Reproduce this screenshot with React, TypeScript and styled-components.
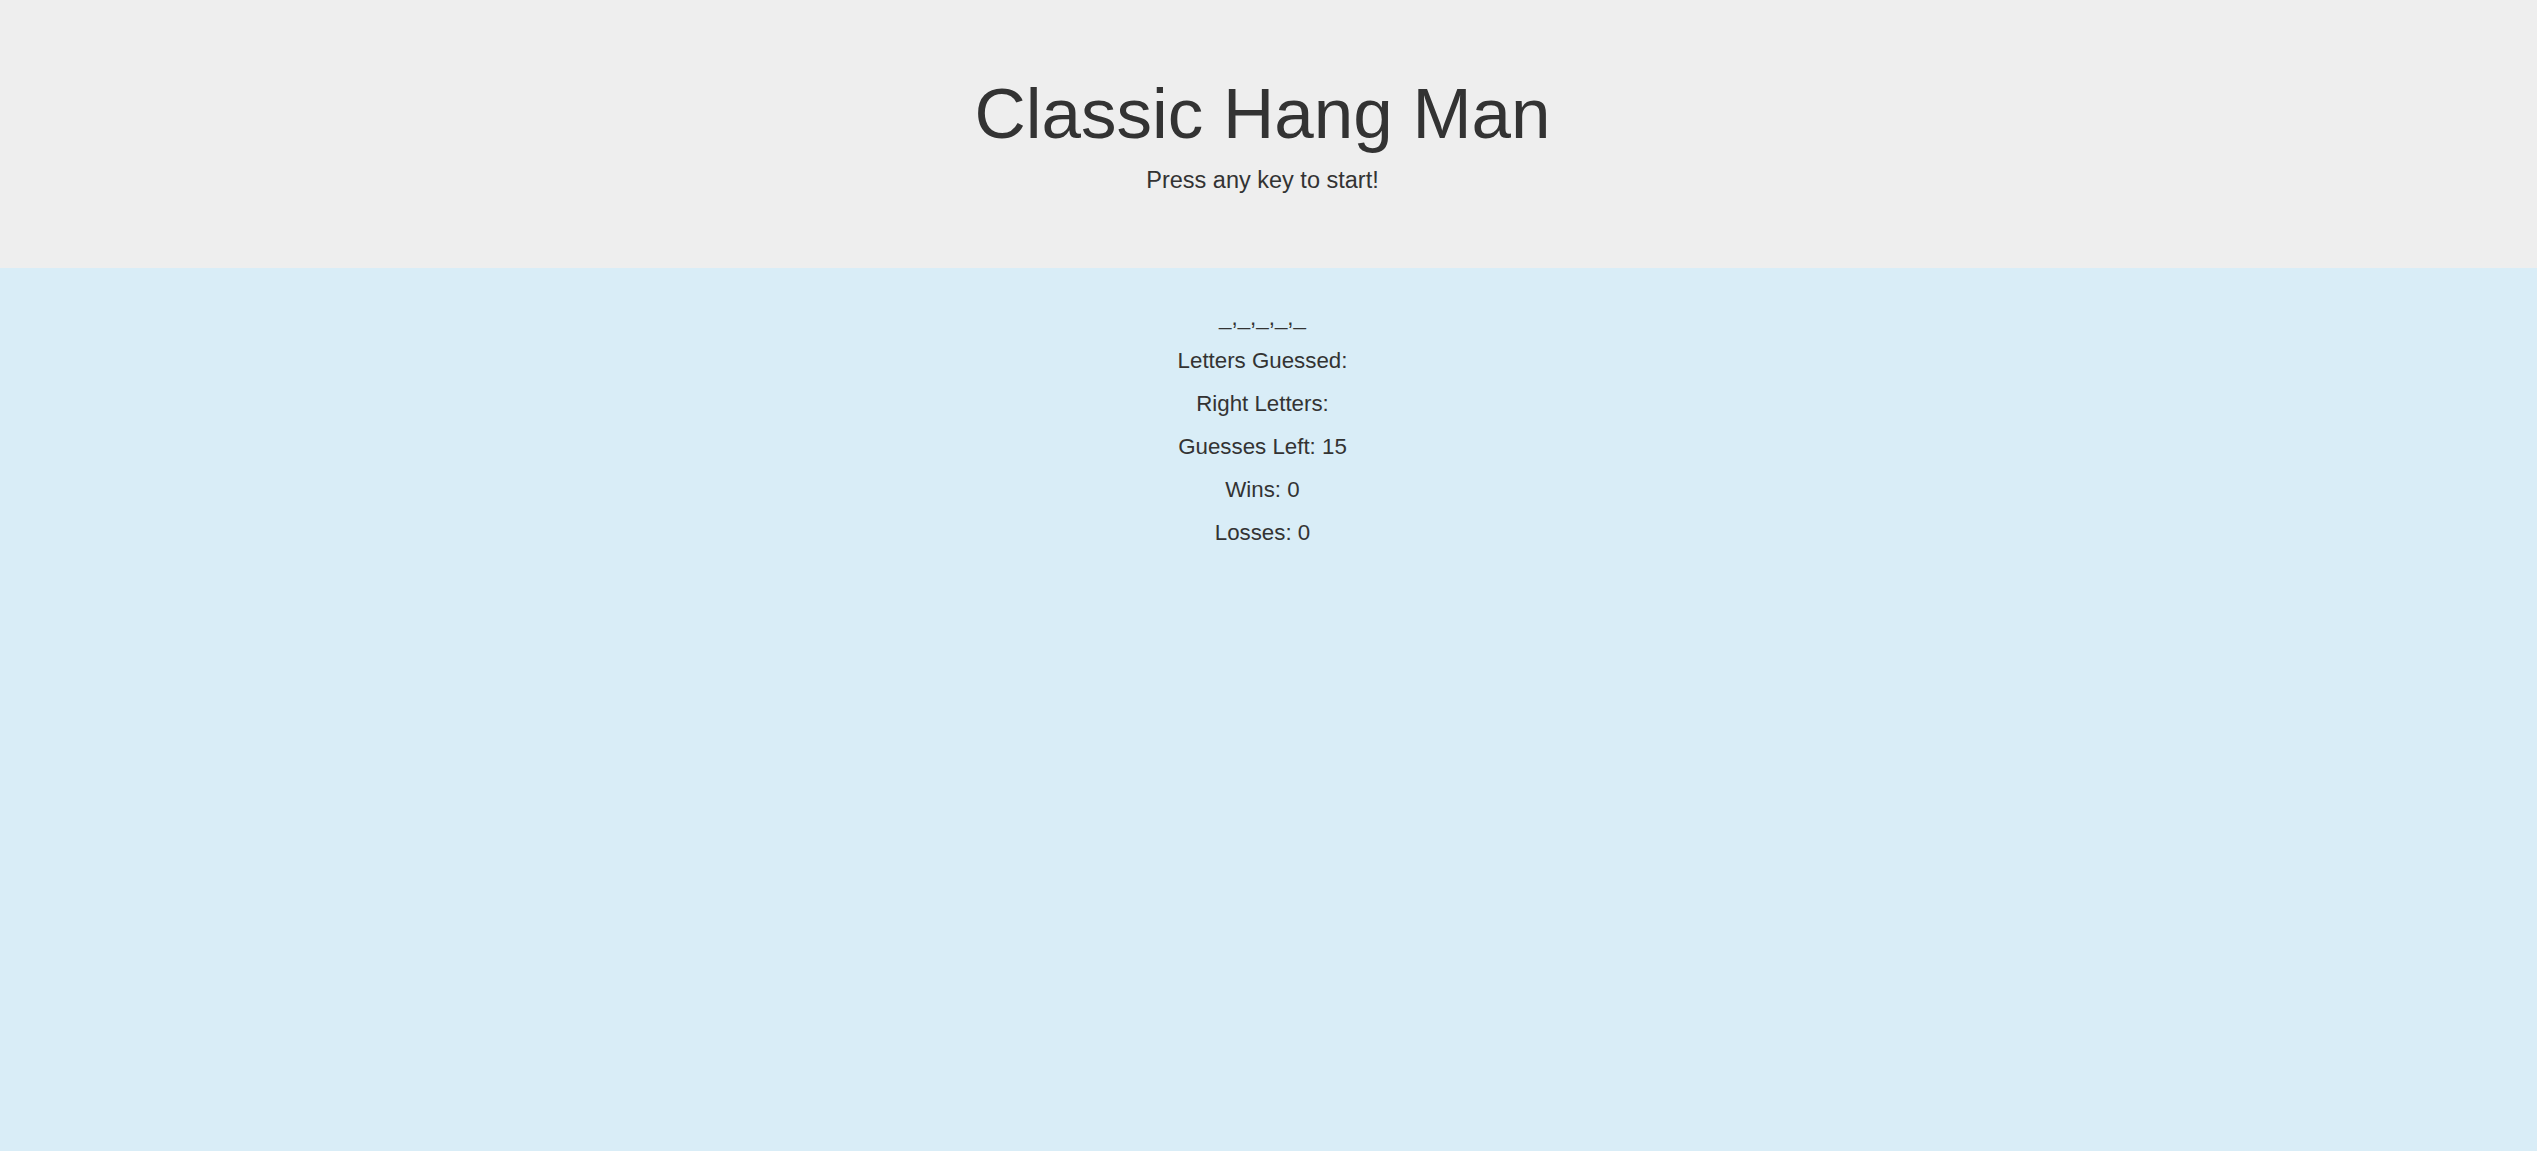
import React from "react";
import styled, { createGlobalStyle } from "styled-components";

const GlobalStyle = createGlobalStyle`
  html, body {
    margin: 0;
    padding: 0;
    background: #d9edf7;
  }
  body {
    font-family: "Liberation Sans", Arial, Helvetica, sans-serif;
    color: #333333;
  }
`;

const Page = styled.div`
  min-height: 100vh;
  display: flex;
  flex-direction: column;
  background: #d9edf7;
`;

const Jumbotron = styled.header`
  box-sizing: border-box;
  height: 268px;
  padding: 74px 12px 0 0;
  background: #eeeeee;
  display: flex;
  flex-direction: column;
  align-items: center;
`;

const Title = styled.h1`
  margin: 0;
  font-size: 71px;
  line-height: 80px;
  font-weight: 400;
  color: #333333;
`;

const Lead = styled.p`
  margin: 9px 0 0;
  font-size: 23.5px;
  line-height: 34px;
  color: #333333;
`;

const Board = styled.main`
  flex: 1;
  padding: 28px 12px 0 0;
  display: flex;
  flex-direction: column;
  align-items: center;
`;

const Row = styled.div`
  font-size: 22.3px;
  line-height: 43px;
  color: #333333;
  text-align: center;
`;

export default function App() {
  const blanks = ["_", "_", "_", "_", "_"];
  const stats: [string, string][] = [
    ["Letters Guessed:", ""],
    ["Right Letters:", ""],
    ["Guesses Left:", "15"],
    ["Wins:", "0"],
    ["Losses:", "0"],
  ];
  return (
    <>
      <GlobalStyle />
      <Page>
        <Jumbotron>
          <Title>Classic Hang Man</Title>
          <Lead>Press any key to start!</Lead>
        </Jumbotron>
        <Board>
          <Row>{blanks.join(",")}</Row>
          {stats.map(([label, value]) => (
            <Row key={label}>
              {label}
              {value ? ` ${value}` : ""}
            </Row>
          ))}
        </Board>
      </Page>
    </>
  );
}
